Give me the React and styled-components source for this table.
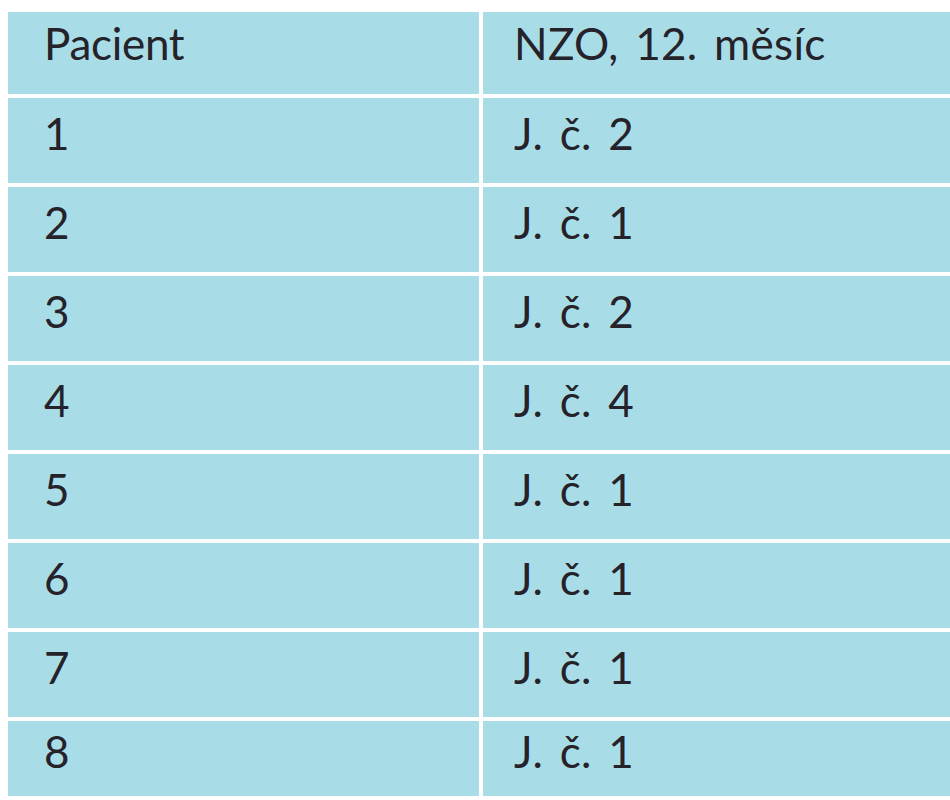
import { Fragment } from "react";
import styled, { createGlobalStyle } from "styled-components";

const GlobalStyle = createGlobalStyle`
  html, body {
    margin: 0;
    padding: 0;
    background: #ffffff;
  }
  body {
    font-family: Lato, "Liberation Sans", sans-serif;
  }
`;

const Page = styled.div`
  padding: 12px 0 4px 8px;
`;

const Table = styled.div`
  display: grid;
  grid-template-columns: 471px 1fr;
  grid-template-rows: 82px repeat(7, 85px) 75px;
  column-gap: 4px;
  row-gap: 4px;
`;

const Cell = styled.div`
  display: flex;
  align-items: center;
  background: #a8dde8;
  color: #25222a;
  font-size: 44px;
  font-weight: 400;
  letter-spacing: ${(p) => (p.$second ? "0.3px" : "-0.3px")};
  word-spacing: ${(p) => (p.$second ? "5px" : "0")};
  padding-left: ${(p) => (p.$second ? "31px" : "36px")};
  padding-bottom: ${(p) => (p.$head ? "20px" : "16px")};
  white-space: pre;
  overflow: hidden;
`;

const rows = [
  ["1", "J. č. 2"],
  ["2", "J. č. 1"],
  ["3", "J. č. 2"],
  ["4", "J. č. 4"],
  ["5", "J. č. 1"],
  ["6", "J. č. 1"],
  ["7", "J. č. 1"],
  ["8", "J. č. 1"],
];

const App = () => {
  return (
    <>
      <GlobalStyle />
      <Page>
        <Table>
          <Cell $head>Pacient</Cell>
          <Cell $head $second>
            NZO, 12. měsíc
          </Cell>
          {rows.map(([id, value]) => (
            <Fragment key={id}>
              <Cell>{id}</Cell>
              <Cell $second>{value}</Cell>
            </Fragment>
          ))}
        </Table>
      </Page>
    </>
  );
};

export default App;
